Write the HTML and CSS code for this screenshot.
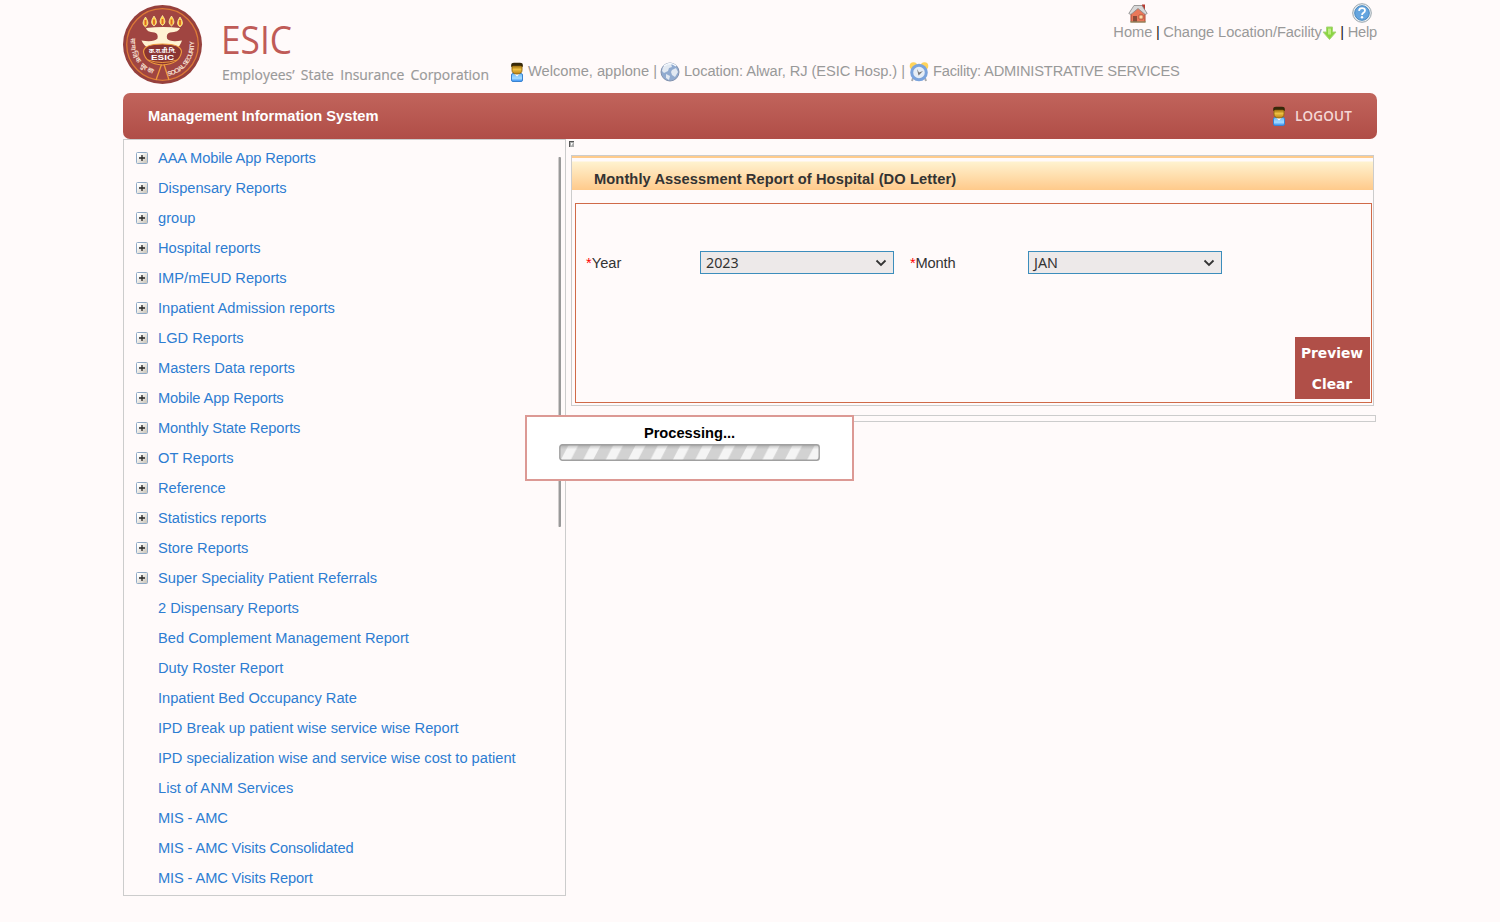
FILE: index.html
```html
<!DOCTYPE html>
<html lang="en">
<head>
<meta charset="utf-8">
<title>ESIC - Management Information System</title>
<link rel="stylesheet" href="styles.css">
</head>
<body>
<svg class="defs" width="0" height="0" aria-hidden="true">
  <defs>
    <linearGradient id="blue" x1="0" y1="0" x2="0" y2="1"><stop offset="0" stop-color="#6bb8fa"/><stop offset=".6" stop-color="#a5dcff"/><stop offset="1" stop-color="#2e8af5"/></linearGradient>
    <linearGradient id="skin" x1="0" y1="0" x2="0" y2="1"><stop offset="0" stop-color="#8a5a00"/><stop offset=".5" stop-color="#efc043"/><stop offset="1" stop-color="#b88010"/></linearGradient>
    <linearGradient id="expander" x1="0" y1="0" x2="1" y2="1"><stop offset=".2" stop-color="#fff"/><stop offset="1" stop-color="#c6c0b4"/></linearGradient>
    <symbol id="user" viewBox="0 0 14 20">
      <path d="M1.500 13q0-1.500 1.500-1.500h8q1.500 0 1.500 1.500v5q0 1.500-1.500 1.500H3Q1.500 19.500 1.500 18z" fill="url(#blue)" stroke="#3b83d0"/>
      <path d="M4 11.500h6L7 14.500z" fill="#fff"/>
      <path d="M2 3h10v5q0 4-5 4T2 8z" fill="url(#skin)" stroke="#93690b" stroke-width=".9"/>
      <path d="M1.200 5V3Q1.200.700 4 .700h6q2.800 0 2.800 2.300v2l-2-1.300H3.200z" fill="#352809"/>
    </symbol>
  </defs>
</svg>
<div class="page">
  <header class="header">
    <svg class="emblem" viewBox="0 0 80 80">
      <defs>
        <path id="arc-left" d="M8.500 33 A31 31 0 0 0 35 70"/>
        <path id="arc-right" d="M45 71 A31.500 31.500 0 0 0 70.500 34"/>
      </defs>
      <circle cx="39.500" cy="39.500" r="39.500" fill="#96403d"/>
      <circle cx="39.500" cy="39.500" r="35.800" fill="#a04541" stroke="#dc7937" stroke-width="1.300"/>
      <path d="M23 23q17-2 34 0-1 4-10 4.500-4 1-3 6 3 4 15 2-2 6-6 8.500H26q-5-3-7.500-8.500 12 2 16-2 1-5-3-6-8-.5-8.500-4.500z" fill="#fff3d3"/>
      <g fill="#ffd53c" stroke="#fff0bb" stroke-width=".7">
        <path d="M22.500 12q5 7 0 10-5-3 0-10z"/><path d="M31 11q5 7 0 10-5-3 0-10z"/><path d="M39.500 10.500q5 7 0 10-5-3 0-10z"/><path d="M48.500 11q5 7 0 10-5-3 0-10z"/><path d="M57 12q5 7 0 10-5-3 0-10z"/>
      </g>
      <g stroke="#db642b" stroke-width="1.800"><path d="M22.500 15v5M31 14.500v5M39.500 14v5M48.500 14.500v5M57 15v5"/></g>
      <path d="M20.500 47q0-8 19-8t19 8q-2 12-19 13-17-1-19-13z" fill="#8a3532" stroke="#ef9b3e" stroke-width="1.200"/>
      <path d="M25 55q14 5 29 0" fill="none" stroke="#ef9b3e" stroke-width="1"/>
      <path d="M38.500 59.500L33 75M41 59.500L46 75" fill="none" stroke="#ef9b3e" stroke-width="1.300"/>
      <text class="emblem-hindi" x="26" y="47.500" textLength="27" lengthAdjust="spacingAndGlyphs">क.रा.बी.नि.</text>
      <text class="emblem-name" x="28" y="54.800" textLength="23" lengthAdjust="spacingAndGlyphs">ESIC</text>
      <text class="emblem-ring"><textPath href="#arc-left" textLength="46">सामाजिक सुरक्षा</textPath></text>
      <text class="emblem-ring"><textPath href="#arc-right" textLength="48">SOCIAL SECURITY</textPath></text>
    </svg>
    <svg class="brand" viewBox="0 0 280 92">
      <text class="brand-name" x="0" y="54" textLength="71" lengthAdjust="spacingAndGlyphs">ESIC</text>
      <text class="brand-sub" x="1" y="80" textLength="267" lengthAdjust="spacingAndGlyphs">Employees’ State Insurance Corporation</text>
    </svg>
    <div class="header-right">
      <nav class="top-links">
        <a class="home"><svg class="icon20" viewBox="0 0 20 20"><path d="M3 9v10h14V9l-7-6z" fill="#e9785a" stroke="#ad4934"/><path d="M14 1.500h3V8h-3z" fill="#b93b30"/><path d="M.8 10.500L6 2.500h8l5.200 8-2 1L10 5.500l-7.200 6z" fill="#d8d8d8" stroke="#888" stroke-width=".8"/><path d="M5 13h4v6H5z" fill="#8b4b39"/><path d="M11 12h4v4h-4z" fill="#ffdba5" stroke="#a84831" stroke-width=".7"/><path d="M2 19h16" stroke="#8b9b6c"/></svg><span>Home</span></a>
        <b class="sep">|</b>
        <a class="change">Change Location/Facility</a><svg class="down" viewBox="0 0 15 15"><path d="M4.500 1h6v5H14L7.500 13.500 1 6h3.500z" fill="#8bd442" stroke="#a9d67a"/><path d="M6 2.500h3v6H6z" fill="#bded83"/></svg>
        <b class="sep">|</b>
        <a class="help"><svg class="icon20" viewBox="0 0 20 20"><circle cx="10" cy="10" r="9.300" fill="#e9eef2" stroke="#99a5ad"/><circle cx="10" cy="10" r="7.300" fill="#65a5df" stroke="#4887be"/><path d="M7 7.800q.3-2.600 3-2.600 3 0 3 2.300 0 1.500-1.700 2.400-1.200.6-1.200 2" fill="none" stroke="#fff" stroke-width="1.800"/><circle cx="10" cy="14.300" r="1.200" fill="#fff"/></svg><span>Help</span></a>
      </nav>
      <div class="welcome">
        <svg class="user" viewBox="0 0 14 20"><use href="#user"/></svg><span class="w-user">Welcome, applone |</span>
        <svg class="icon20" viewBox="0 0 20 20"><circle cx="10" cy="10" r="9" fill="#91abd0" stroke="#8292ae"/><path d="M3 5q4-4 8-3l1 3-3 1-1 3-4 2-2-2zM12 8l4-2 2 4-3 5-3-2-1-3zM6 12l4 2-1 4-3-2z" fill="#e2e9f2"/><path d="M4 4q6-5 12 0" stroke="#f7fbff" fill="none" stroke-width="1.500"/></svg><span class="w-location">Location: Alwar, RJ (ESIC Hosp.) |</span>
        <svg class="icon20" viewBox="0 0 20 20"><circle cx="4.500" cy="4" r="3.800" fill="#ffd45b"/><circle cx="15.500" cy="4" r="3.800" fill="#ffd45b"/><path d="M4 16l-1 3M16 16l1 3" stroke="#aaa" stroke-width="2"/><circle cx="10" cy="10.500" r="7.300" fill="#e6edf5" stroke="#7aa3dc" stroke-width="3"/><path d="M8 7l1.500 6.500L14 9l-4 1.500z" fill="#777"/></svg><span class="w-facility">Facility: ADMINISTRATIVE SERVICES</span>
      </div>
    </div>
  </header>
  <div class="titlebar"><span class="title">Management Information System</span><a class="logout"><svg class="user" viewBox="0 0 14 20"><use href="#user"/></svg><span>LOGOUT</span></a></div>
  <div class="body">
    <aside class="tree"><ul id="tree" class="tree-list"></ul><i class="scroll"></i></aside>
    <main class="main">
      <svg class="broken" viewBox="0 0 5 6"><path d="M0 0h5v6H0z" fill="#aaa"/><path d="M0 0h5v1H1v5H0z" fill="#555"/><path d="M2 2h2L2 5z" fill="#fff"/></svg>
      <section class="report">
        <h1>Monthly Assessment Report of Hospital (DO Letter)</h1>
        <form class="form">
          <div class="fields">
            <label><em>*</em>Year</label>
            <span class="select">2023<svg viewBox="0 0 12 8"><path d="M1.500 1.500L6 6l4.500-4.500"/></svg></span>
            <label class="month"><em>*</em>Month</label>
            <span class="select">JAN<svg viewBox="0 0 12 8"><path d="M1.500 1.500L6 6l4.500-4.500"/></svg></span>
          </div>
          <div class="buttons"><button type="button">Preview</button><button type="button">Clear</button></div>
        </form>
      </section>
      <div class="result"></div>
    </main>
  </div>
</div>
<div class="processing"><span>Processing...</span>
  <svg class="progress" viewBox="0 0 261 17">
    <defs>
      <pattern id="stripes" width="22.400" height="17" patternUnits="userSpaceOnUse"><path d="M0 0h22.400v17H0z" fill="#f4f4f4"/><path d="M-2.400 0H10L1.200 17H-11.200zM20 0h12.400l-8.800 17H11.200z" fill="#d2d2d2"/></pattern>
      <linearGradient id="shade" x1="0" y1="0" x2="0" y2="1"><stop offset="0" stop-color="#777" stop-opacity=".45"/><stop offset=".3" stop-color="#999" stop-opacity="0"/></linearGradient>
    </defs>
    <rect x=".8" y=".8" width="259.400" height="15.400" rx="2.500" fill="url(#stripes)"/>
    <rect x=".8" y=".8" width="259.400" height="15.400" rx="2.500" fill="url(#shade)" stroke="#a0a0a0" stroke-width="1.400"/>
  </svg>
</div>
<script src="tree.js"></script>
</body>
</html>
```
FILE: styles.css
```css
* { box-sizing: border-box; }
body { margin: 0; background: #fffafa; font-family: "Liberation Sans", Arial, sans-serif; font-size: 14.67px; color: #333; height: 922px; overflow: hidden; }
.defs { position: absolute; }
.page { width: 1254px; margin: 0 auto; }
.header { height: 93px; display: flex; color: #999; }
.emblem { width: 80px; height: 80px; margin-top: 5px; flex: none; }
.emblem-hindi { font: bold 6.5px "Noto Sans", sans-serif; fill: #fff; }
.emblem-name { font: bold 8px "Liberation Sans", sans-serif; fill: #fff; }
.emblem-ring { font: bold 6.5px "Liberation Sans", sans-serif; fill: #f5dfce; }
.brand { width: 280px; height: 92px; margin-left: 18px; flex: none; overflow: visible; }
.brand-name { font: 39px "Open Sans", sans-serif; fill: #bf5b57; }
.brand-sub { font: 15.3px "Open Sans", sans-serif; fill: #999; stroke: #999; stroke-width: .2px; word-spacing: 3px; }
.header-right { flex: 1; display: flex; flex-direction: column; }
.top-links { height: 41px; padding-top: 3px; display: flex; justify-content: flex-end; align-items: flex-end; line-height: 17px; white-space: pre; }
.top-links a { display: flex; flex-direction: column; align-items: center; }
.top-links .change { letter-spacing: -.08px; }
.home span, .help span { margin-top: 1px; }
.help span { letter-spacing: -.2px; }
.home .icon20 { margin-left: 11px; }
.help .icon20 { margin-right: 1px; }
.sep { color: #222; font-weight: normal; margin: 0 3.5px; }
.icon20 { width: 20px; height: 20px; flex: none; }
.down { width: 15px; height: 15px; }
.welcome { height: 20px; margin: 21px 0 0 9px; display: flex; align-items: center; white-space: nowrap; line-height: 18px; }
.user { width: 14px; height: 20px; flex: none; }
.w-user { margin: -2px 3px 0 4px; }
.w-location { margin: -2px 4px 0 4px; letter-spacing: -.06px; }
.w-facility { margin: -2px 0 0 4px; letter-spacing: -.18px; }
.titlebar { height: 46px; border-radius: 7px; background: linear-gradient(#c1645c, #b04d47); display: flex; justify-content: space-between; align-items: center; padding: 0 25px; color: #fff; }
.title { font-weight: bold; }
.logout { display: flex; align-items: center; font: 600 13.5px "Open Sans", sans-serif; color: #f5d8d6; letter-spacing: .15px; }
.logout .user { margin-right: 9px; }
.body { display: flex; align-items: flex-start; }
.tree { width: 443px; height: 757px; border: 1px solid #ccc; display: flex; justify-content: space-between; }
.tree-list { list-style: none; margin: 3px 0 0 12px; padding: 0; }
.tree-list li { height: 30px; display: flex; align-items: center; white-space: nowrap; color: #2d7dd2; }
.tree-list .tight { letter-spacing: -.13px; }
.expander { width: 12px; height: 12px; margin-right: 10px; }
.scroll { width: 3px; height: 370px; background: linear-gradient(90deg, #d0cccc 0 1px, #999 1px); margin: 17px 4px 0 0; border-radius: 1px; }
.main { flex: 1; padding: 2px 0 0 5px; }
.broken { display: block; width: 5px; height: 6px; margin-left: -2px; }
.report { width: 803px; height: 251px; margin-top: 8px; border: 1px solid #ccc; padding: 0 1px 2px 3px; }
.report h1 { height: 34px; margin: 0 -1px 13px -3px; border-top: 2px solid #ffcb8c; padding: 6px 0 0 22px; background: linear-gradient(#fffafa 0 3px, #fff2cf 4px, #ffca8b); font-size: 14.67px; line-height: 30px; letter-spacing: .09px; color: #333; }
.form { height: 200px; border: 1px solid #d06a48; display: flex; flex-direction: column; justify-content: space-between; padding: 47px 1px 3px 10px; }
.fields { display: grid; grid-template-columns: 114px 210px 118px 194px; align-items: center; }
.fields em { color: red; font-style: normal; }
.month { letter-spacing: -.15px; }
.select { width: 194px; height: 23px; border: 1px solid #3c8dbc; background: #ede9e9; padding: 0 6px 0 5px; display: flex; align-items: center; justify-content: space-between; font: 14.3px "Noto Sans", sans-serif; }
.select svg { width: 12px; height: 8px; fill: none; stroke: #333; stroke-width: 1.8; }
.buttons { display: flex; flex-direction: column; align-self: flex-end; width: 75px; }
.buttons button { height: 31px; border: 0; padding: 0 1px 0 0; background: #b04f48; color: #fff; font: bold 13.8px "DejaVu Sans", Verdana, sans-serif; }
.result { width: 805px; height: 7px; margin-top: 9px; border: 1px solid #ccc; }
.processing { position: absolute; left: 525px; top: 415px; width: 329px; height: 66px; border: 2px solid #dc9994; background: #fff; display: flex; flex-direction: column; align-items: center; color: #000; font-weight: bold; padding-top: 7px; line-height: 18px; }
.progress { width: 261px; height: 17px; margin-top: 2px; }
```
FILE: tree.js
```js
const folders = ["AAA Mobile App Reports", "Dispensary Reports", "group", "Hospital reports", "IMP/mEUD Reports", "Inpatient Admission reports", "LGD Reports", "Masters Data reports", "Mobile App Reports", "Monthly State Reports", "OT Reports", "Reference", "Statistics reports", "Store Reports", "Super Speciality Patient Referrals"];
const reports = ["2 Dispensary Reports", "Bed Complement Management Report", "Duty Roster Report", "Inpatient Bed Occupancy Rate", "IPD Break up patient wise service wise Report", "IPD specialization wise and service wise cost to patient", "List of ANM Services", "MIS - AMC", "MIS - AMC Visits Consolidated", "MIS - AMC Visits Report"];
const plus = '<rect x=".5" y=".5" width="11" height="11" rx="1" fill="url(#expander)" stroke="#91abc7"/><path d="M3 6h6M6 3v6" stroke="#222" stroke-width="1.300"/>';
const tight = /^(AAA|Mobile|Monthly|MIS)/;
const row = (name, icon) => `<li><svg class="expander" viewBox="0 0 12 12">${icon}</svg><span class="${tight.test(name) ? "tight" : "label"}">${name}</span></li>`;
document.getElementById("tree").innerHTML = folders.map(n => row(n, plus)).join("") + reports.map(n => row(n, "")).join("");
```
